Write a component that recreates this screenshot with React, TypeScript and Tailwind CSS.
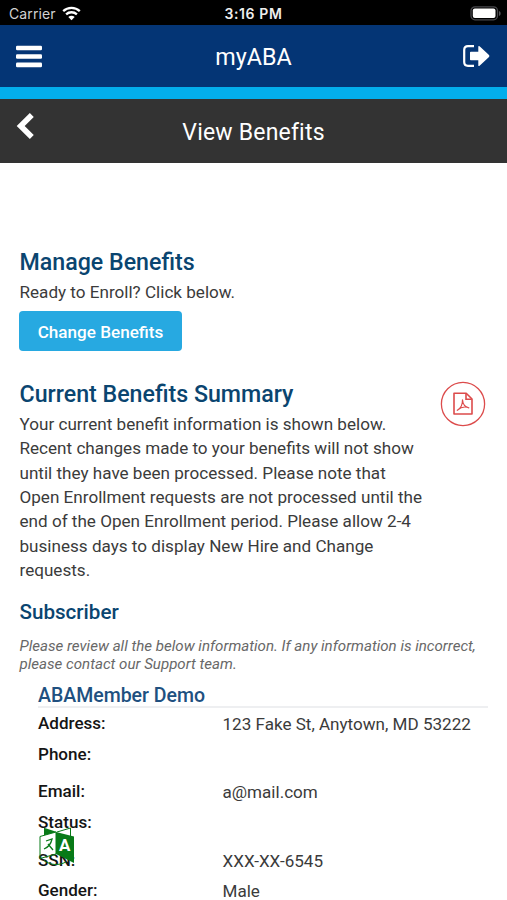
import React from "react";

function StatusBar() {
  return (
    <div className="relative flex h-[25px] items-center justify-between bg-black pl-[9px] pr-[6px] text-white">
      <div className="flex items-center gap-[6px] pt-[2px]">
        <span className="font-['Inter',sans-serif] text-[14px] leading-[20px] tracking-[0.1px] text-[#d2d2d2]">Carrier</span>
        <svg width="19" height="15" viewBox="0 0 19 15" fill="none" stroke="#fff" strokeWidth="2.3">
          <path d="M1.2 5.2C5.8 .8 13.2 .8 17.8 5.2" />
          <path d="M4.1 8.4C7.1 5.5 11.9 5.5 14.9 8.4" />
          <path d="M6.3 10.9C8.1 9.2 10.9 9.2 12.7 10.9L9.5 14.2Z" fill="#fff" stroke="none" />
        </svg>
      </div>
      <span className="absolute left-0 right-0 top-[4px] text-center font-['Inter',sans-serif] text-[14px] font-semibold leading-[20px] tracking-[0.6px] text-[#eee]">3:16 PM</span>
      <svg width="31" height="15" viewBox="0 0 31 15" className="mt-[1px]">
        <rect x="1" y=".8" width="26.5" height="13" rx="4" fill="none" stroke="#48484c" strokeWidth="1.3" />
        <rect x="2.8" y="2.5" width="22.7" height="9.6" rx="2" fill="#fff" />
        <path d="M29 5v5c2.2-1 2.2-4 0-5Z" fill="#55555a" />
      </svg>
    </div>
  );
}

function Header() {
  return (
    <>
      <header className="grid h-[62px] grid-cols-[60px_1fr_60px] items-center bg-[#043575] text-white">
        <svg className="ml-[16px]" width="26" height="23" viewBox="0 0 26 23" fill="#fff">
          <rect x="0" y=".7" width="26" height="4.6" rx="1.2" />
          <rect x="0" y="9.2" width="26" height="4.6" rx="1.2" />
          <rect x="0" y="17.6" width="26" height="4.6" rx="1.2" />
        </svg>
        <h1 className="pt-[2px] text-center text-[23.3px] leading-[28px]">myABA</h1>
        <svg className="ml-[16px]" width="27" height="22" viewBox="0 0 27 22">
          <path d="M11 1.2H5Q1.2 1.2 1.2 5V17Q1.2 20.8 5 20.8H11" fill="none" stroke="#fff" strokeWidth="2.2" />
          <path d="M7.8 6.8H15.3V1.6Q15.5 .4 16.6 1.2L26 10.1Q26.8 11 26 11.9L16.6 20.8Q15.5 21.6 15.3 20.4V15.2H7.8Q7 15.2 7 14.4V7.6Q7 6.8 7.8 6.8Z" fill="#fff" />
        </svg>
      </header>
      <div className="h-[12px] bg-[#03aeec]" />
      <div className="grid h-[64px] grid-cols-[60px_1fr_60px] items-center bg-[#333333] text-white">
        <svg className="-mt-[10px] ml-[16px]" width="18" height="28" viewBox="0 0 18 28">
          <path d="M15.8 3.1L4.7 14L15.8 24.9" fill="none" stroke="#fff" strokeWidth="5.6" />
        </svg>
        <h2 className="pt-[3px] text-center text-[23px] leading-[28px] tracking-[0.2px]">View Benefits</h2>
      </div>
    </>
  );
}

function PdfButton() {
  return (
    <button className="mt-[2px] h-[46px] w-[46px] shrink-0">
      <svg width="46" height="46" viewBox="0 0 46 46" fill="none" stroke="#dc4b4b">
        <circle cx="23" cy="23" r="21.6" strokeWidth="1.3" />
        <path d="M14 12.2H26.2L32 18V33H14Z" strokeWidth="1.6" strokeLinejoin="round" />
        <path d="M26 12.5V18.2H31.8" strokeWidth="1.6" />
        <path d="M17.3 29.3C20.4 27.6 22.6 23.6 22.5 18.8C22.8 22.8 24.8 26 28.8 26.8C25.4 25.4 20.8 26.2 17.3 29.3Z" strokeWidth="1.2" strokeLinejoin="round" />
      </svg>
    </button>
  );
}

function TranslateBadge() {
  return (
    <svg className="absolute left-[39px] top-[827px]" width="36" height="39" viewBox="0 0 36 39">
      <path d="M18 5L31.5 1V9" fill="none" stroke="#087a18" strokeWidth="1" />
      <path d="M5 .8L18 5L5 9Z" fill="#087a18" />
      <path d="M1 9.5L17 5V26L1 27Z" fill="#fff" />
      <path d="M1 31.5V9.5L17 5V27L1 31.5" fill="none" stroke="#087a18" strokeWidth="1" />
      <path d="M17 5L35 9.5V36L17 27Z" fill="#087a18" />
      <path d="M7 14L13 12C12 17 9.5 20 5 22M9 17L14 23" fill="none" stroke="#087a18" strokeWidth="1.3" />
      <path d="M5 33.4C11 38 19 39 27 35" fill="none" stroke="#087a18" strokeWidth="1" />
      <text x="20" y="24" fill="#fff" fontFamily="Roboto, sans-serif" fontWeight="700" fontSize="17">A</text>
    </svg>
  );
}

const summary = [
  "Your current benefit information is shown below.",
  "Recent changes made to your benefits will not show",
  "until they have been processed. Please note that",
  "Open Enrollment requests are not processed until the",
  "end of the Open Enrollment period. Please allow 2-4",
  "business days to display New Hire and Change",
  "requests.",
];

function Field({ label, value, height }: { label: string; value?: string; height: string }) {
  return (
    <div className={"flex whitespace-nowrap text-[17.07px] leading-[24px] " + height}>
      <dt className="w-[184.5px] font-medium text-[#151515]">{label}</dt>
      <dd className="pt-[1px] text-[#3b3b3b]">{value}</dd>
    </div>
  );
}

export default function App() {
  return (
    <div className="relative h-[900px] w-[507px] overflow-hidden bg-white font-['Roboto',sans-serif]">
      <StatusBar />
      <Header />
      <main className="whitespace-nowrap pl-[19.5px] pr-[19px] pt-[85px] text-[#3b3b3b]">
        <section>
          <h3 className="text-[23.2px] font-medium leading-[29px] text-[#0a4570]">Manage Benefits</h3>
          <p className="mt-[3px] text-[17.1px] leading-[24px]">Ready to Enroll? Click below.</p>
          <button className="-ml-[0.5px] mt-[7px] block h-[40px] w-[163px] rounded-[4px] bg-[#27a9e1] pt-[3px] text-[17.1px] font-medium text-white">Change Benefits</button>
        </section>
        <section className="mt-[28px] flex justify-between pr-[2px]">
          <div>
            <h3 className="text-[23.2px] font-medium leading-[30px] text-[#0a4570]">Current Benefits Summary</h3>
            <div className="mt-[2.6px] text-[17.1px] leading-[24.45px]">
              {summary.map((line) => <p key={line}>{line}</p>)}
            </div>
          </div>
          <PdfButton />
        </section>
        <section className="mt-[15.4px]">
          <h3 className="text-[20.6px] font-medium leading-[28px] text-[#0a4570]">Subscriber</h3>
          <p className="mt-[10.5px] text-[15.1px] italic leading-[18.5px] text-[#686868]">
            Please review all the below information. If any information is incorrect,<br />
            please contact our Support team.
          </p>
          <div className="ml-[18.5px] mt-[9.5px]">
            <h4 className="h-[25px] border-b-2 border-[#eeeff1] pt-[1px] text-[19.5px] font-medium leading-[24px] text-[#205080]">ABAMember Demo</h4>
            <dl className="mt-[3px]">
              <Field label="Address:" value="123 Fake St, Anytown, MD 53222" height="h-[31px]" />
              <Field label="Phone:" height="h-[37px]" />
              <Field label="Email:" value="a@mail.com" height="h-[31px]" />
              <Field label="Status:" height="h-[38px]" />
              <Field label="SSN:" value="XXX-XX-6545" height="h-[30px]" />
              <Field label="Gender:" value="Male" height="h-[31px]" />
            </dl>
          </div>
        </section>
      </main>
      <TranslateBadge />
    </div>
  );
}
